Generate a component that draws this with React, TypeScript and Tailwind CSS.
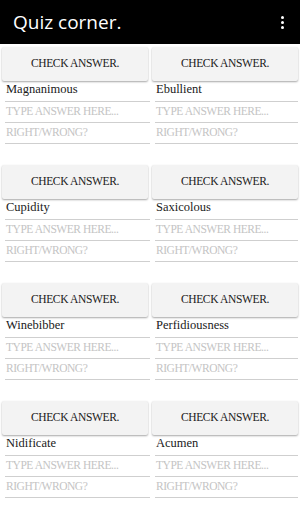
import React from 'react';

const words: string[] = [
  'Magnanimous',
  'Ebullient',
  'Cupidity',
  'Saxicolous',
  'Winebibber',
  'Perfidiousness',
  'Nidificate',
  'Acumen',
];

const QuizCell: React.FC<{ word: string; right?: boolean }> = ({ word, right }) => (
  <div className="flex flex-col px-[2px]">
    <button className="mt-[3px] h-[34px] w-full rounded-[2px] bg-[#f3f3f3] text-[11.5px] text-[#1a1a1a] shadow-[0_1px_2px_rgba(0,0,0,0.35)] tracking-[-0.03em]">
      CHECK ANSWER.
    </button>
    <div className={right ? 'ml-[3px] mr-0 flex flex-col' : 'ml-[3px] -mr-[2px] flex flex-col'}>
      <div className="h-[21px] flex items-end pb-[2px] pl-[1px] border-b border-[#cfcfcf] text-[12.5px] text-[#1a1a1a]">
        {word}
      </div>
      <div className="h-[21px] flex items-end pb-[2px] pl-[1px] border-b border-[#cfcfcf] text-[11.5px] text-[#c4c4c4] tracking-[-0.04em]">
        TYPE ANSWER HERE...
      </div>
      <div className="h-[21px] flex items-end pb-[2px] pl-[1px] border-b border-[#cfcfcf] text-[11.5px] text-[#c4c4c4] tracking-[-0.04em]">
        RIGHT/WRONG?
      </div>
    </div>
  </div>
);

const App: React.FC = () => {
  const pairs: string[][] = [];
  for (let i = 0; i < words.length; i += 2) pairs.push([words[i], words[i + 1]]);

  return (
    <div className="w-[300px] h-[512px] overflow-hidden bg-white font-['Liberation_Serif',serif]">
      <header className="h-[44px] bg-black flex items-center justify-between pl-[13px] pr-[16px]">
        <h1 className="text-white text-[19px] font-['Open_Sans',sans-serif]">Quiz corner.</h1>
        <div className="flex flex-col gap-[2px]">
          <span className="w-[3px] h-[3px] bg-white rounded-full" />
          <span className="w-[3px] h-[3px] bg-white rounded-full" />
          <span className="w-[3px] h-[3px] bg-white rounded-full" />
        </div>
      </header>
      {pairs.map((p, i) => (
        <div key={i} className="grid grid-cols-2 pb-[18px]">
          <QuizCell word={p[0]} />
          <QuizCell word={p[1]} right />
        </div>
      ))}
    </div>
  );
};

export default App;
